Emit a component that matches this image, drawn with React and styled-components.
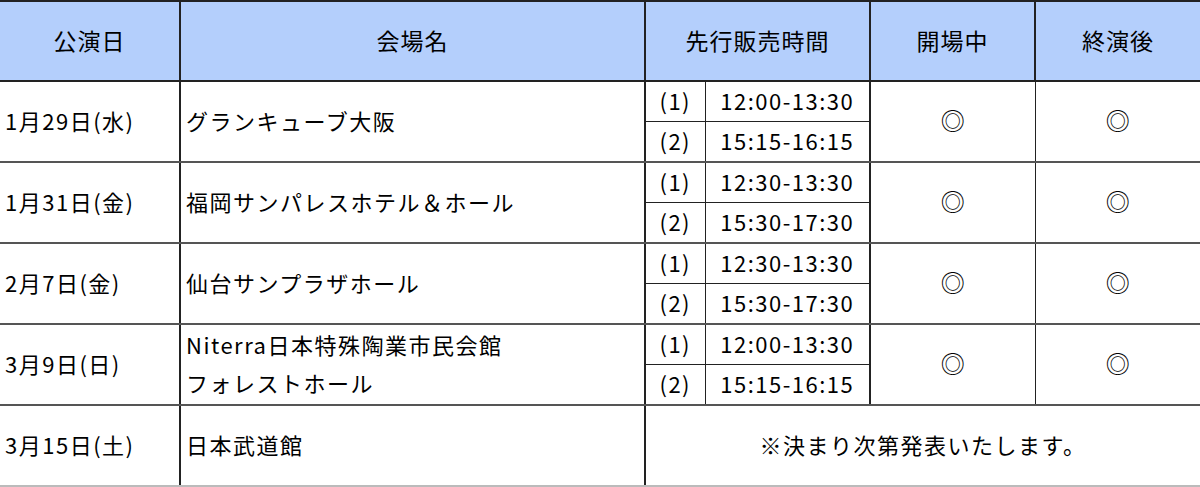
import React from 'react'
import styled, { createGlobalStyle } from 'styled-components'

const Global = createGlobalStyle`
  html, body {
    margin: 0;
    padding: 0;
    background: #fff;
  }
  body {
    font-family: "Noto Sans CJK JP", "Noto Sans", sans-serif;
    color: #000;
  }
`

const Table = styled.table`
  width: 1200px;
  border-collapse: collapse;
  table-layout: fixed;
  border-top: 2px solid #222;
`

const HeadCell = styled.th`
  height: 75px;
  padding: 0 0 3px;
  background: #b4cffc;
  font-weight: 400;
  font-size: 23px;
  letter-spacing: 1px;
  text-align: center;
  border-left: ${(p) => (p.first ? 'none' : '2px solid #222')};
  border-bottom: 2px solid #222;
`

const Cell = styled.td`
  padding: 0 0 3px ${(p) => (p.pad ? '5px' : '0')};
  font-size: 22px;
  letter-spacing: 1.5px;
  line-height: 36px;
  height: ${(p) => (p.tall ? '76px' : 'auto')};
  text-align: ${(p) => (p.center ? 'center' : 'left')};
  border-left: ${(p) => (p.first ? 'none' : p.thin ? '1px solid #222' : '2px solid #222')};
  border-bottom: ${(p) => (p.sub ? '1px solid #222' : p.last ? '2px solid #bbb' : '2px solid #555')};
  white-space: nowrap;
`

const VenueLine = styled.div`
  line-height: 38px;
`

const Mark = styled.span`
  font-size: 24px;
  letter-spacing: 0;
`

const shows = [
  { date: '1月29日(水)', venue: ['グランキューブ大阪'], times: ['12:00-13:30', '15:15-16:15'] },
  { date: '1月31日(金)', venue: ['福岡サンパレスホテル＆ホール'], times: ['12:30-13:30', '15:30-17:30'] },
  { date: '2月7日(金)', venue: ['仙台サンプラザホール'], times: ['12:30-13:30', '15:30-17:30'] },
  { date: '3月9日(日)', venue: ['Niterra日本特殊陶業市民会館', 'フォレストホール'], times: ['12:00-13:30', '15:15-16:15'] }
]

const ShowRows = ({ show }) => (
  <>
    <tr>
      <Cell rowSpan={2} first pad>{show.date}</Cell>
      <Cell rowSpan={2} pad>
        {show.venue.map((v) => (
          <VenueLine key={v}>{v}</VenueLine>
        ))}
      </Cell>
      <Cell center sub>(1)</Cell>
      <Cell center sub thin>{show.times[0]}</Cell>
      <Cell rowSpan={2} center><Mark>◎</Mark></Cell>
      <Cell rowSpan={2} center thin><Mark>◎</Mark></Cell>
    </tr>
    <tr>
      <Cell center>(2)</Cell>
      <Cell center thin>{show.times[1]}</Cell>
    </tr>
  </>
)

const App = () => (
  <>
    <Global />
    <Table>
      <colgroup>
        <col style={{ width: 180 }} />
        <col style={{ width: 465 }} />
        <col style={{ width: 60 }} />
        <col style={{ width: 165 }} />
        <col style={{ width: 165 }} />
        <col style={{ width: 165 }} />
      </colgroup>
      <thead>
        <tr>
          <HeadCell first>公演日</HeadCell>
          <HeadCell>会場名</HeadCell>
          <HeadCell colSpan={2}>先行販売時間</HeadCell>
          <HeadCell>開場中</HeadCell>
          <HeadCell>終演後</HeadCell>
        </tr>
      </thead>
      <tbody>
        {shows.map((s) => (
          <ShowRows show={s} key={s.date} />
        ))}
        <tr>
          <Cell first pad tall last>3月15日(土)</Cell>
          <Cell pad last>日本武道館</Cell>
          <Cell colSpan={4} center last>※決まり次第発表いたします。</Cell>
        </tr>
      </tbody>
    </Table>
  </>
)

export default App
